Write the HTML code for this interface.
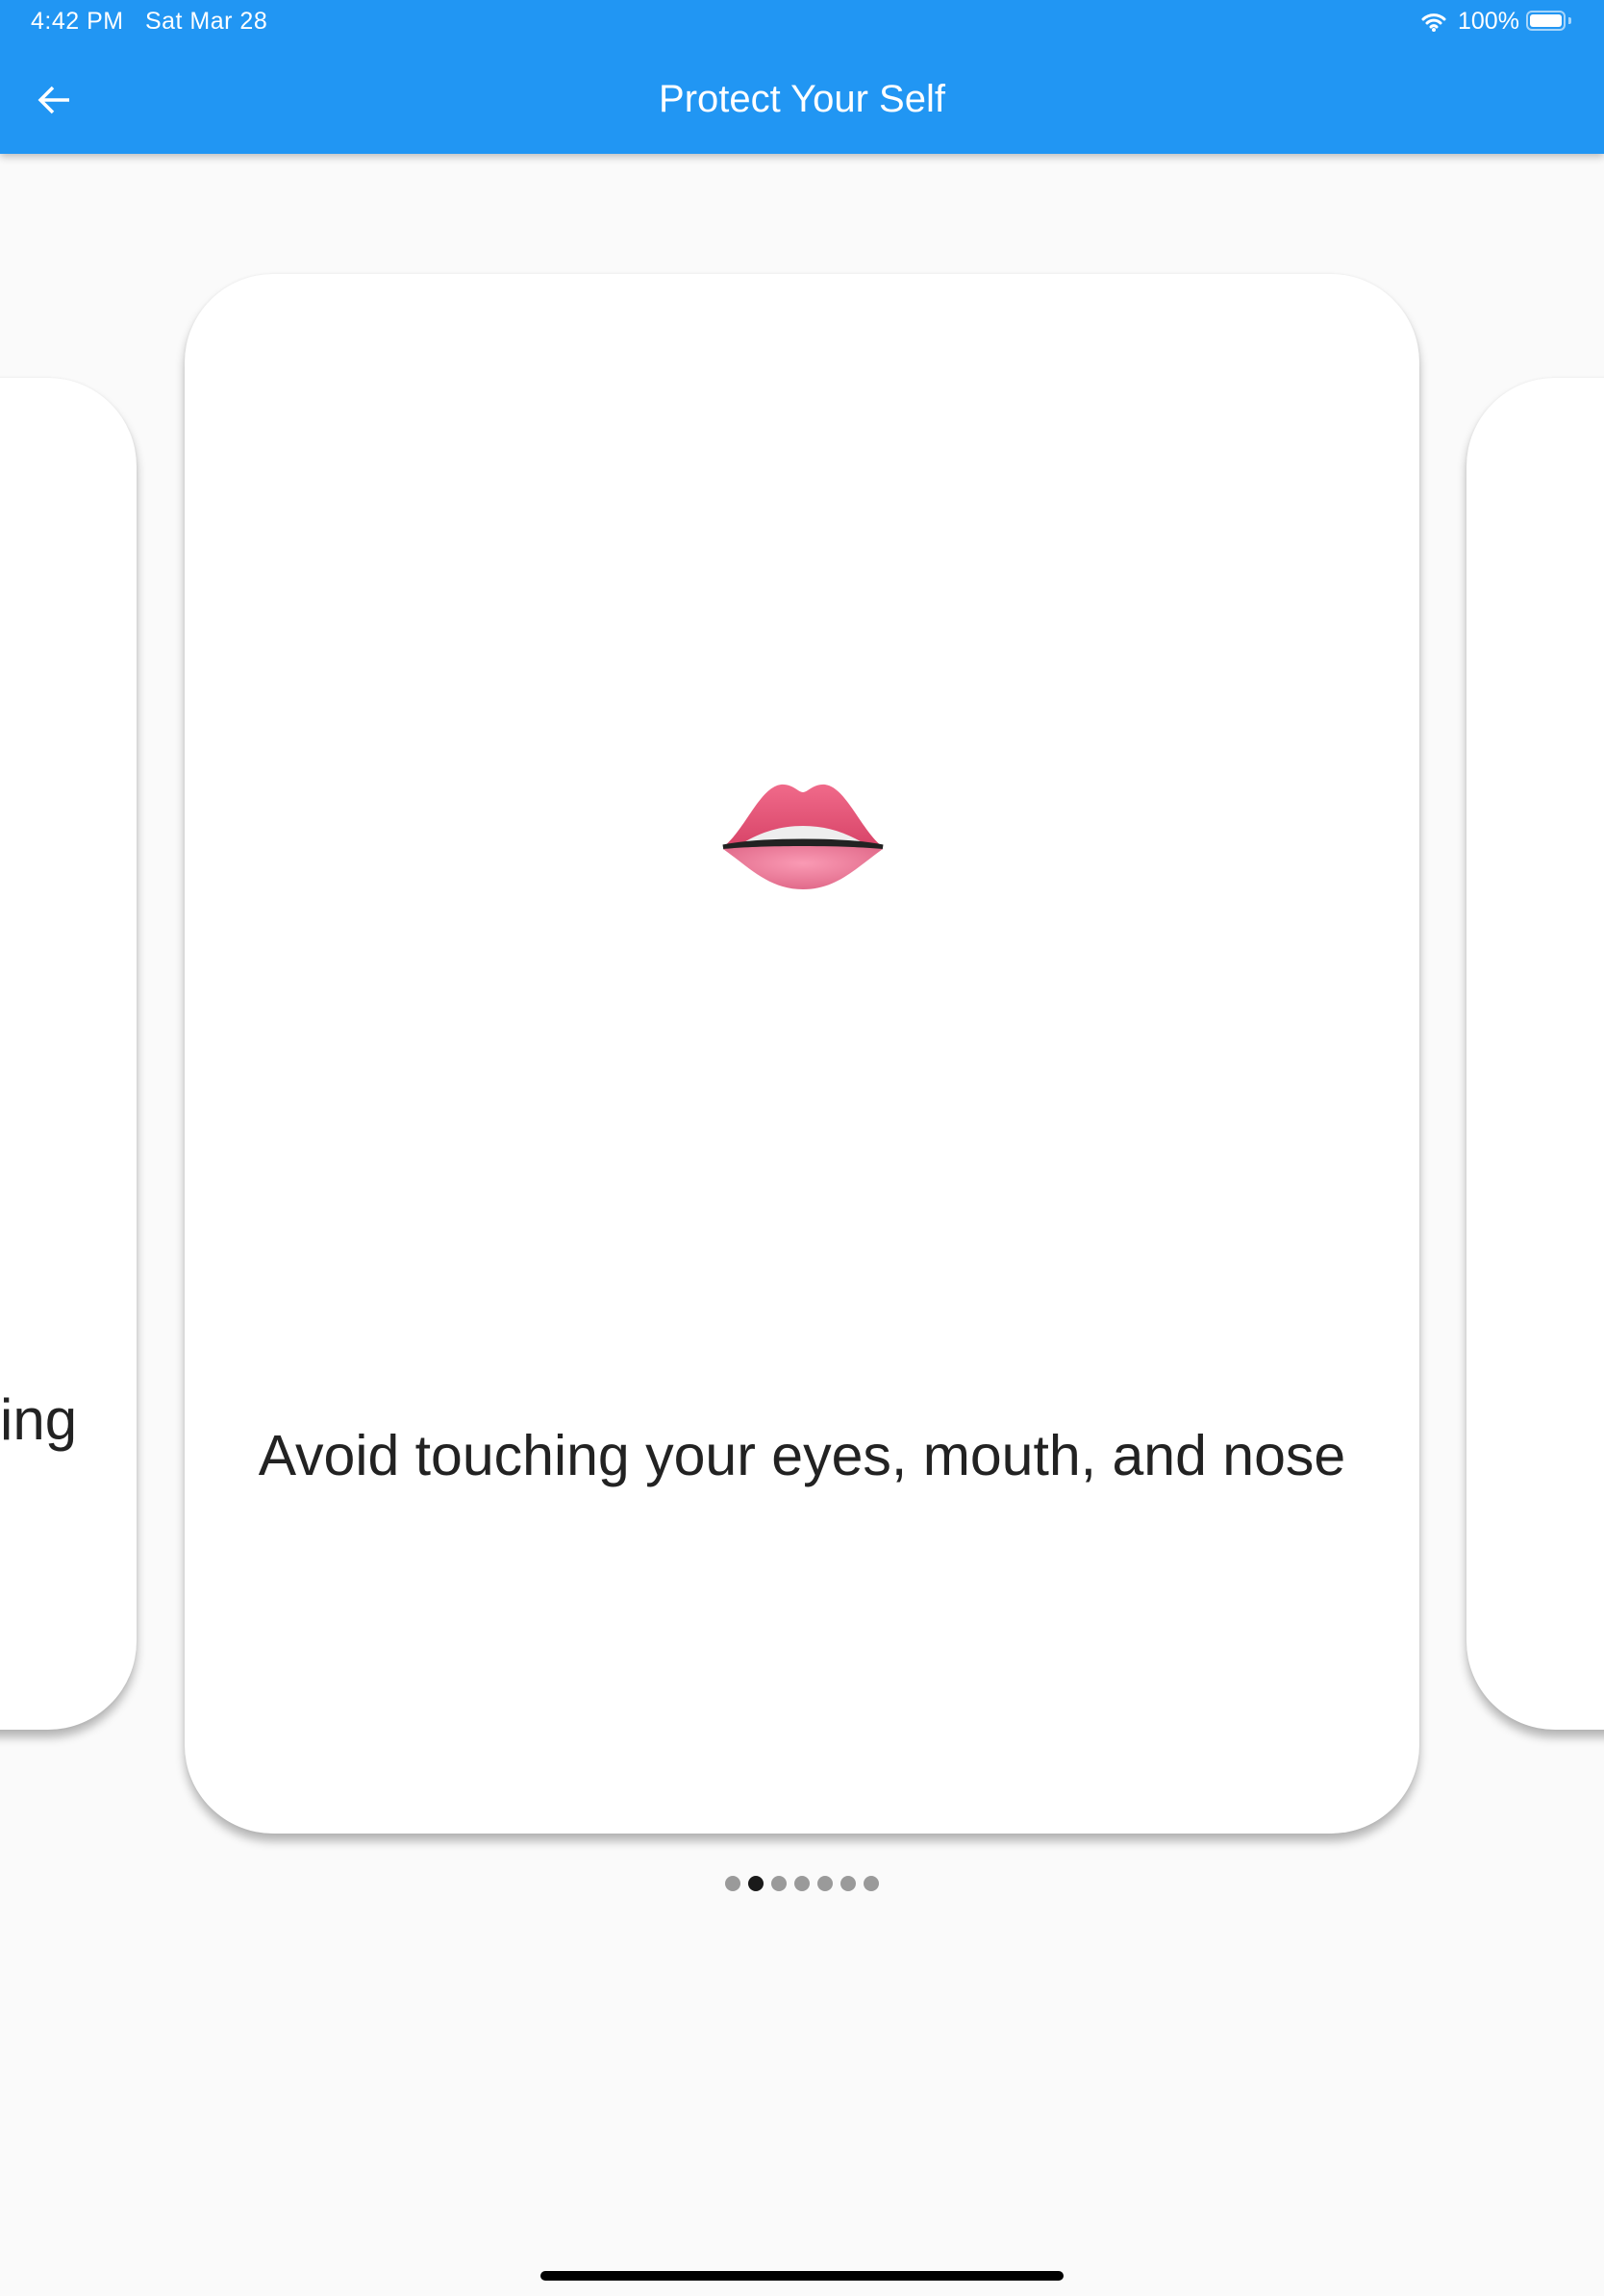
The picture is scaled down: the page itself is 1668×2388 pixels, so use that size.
<!DOCTYPE html>
<html><head><style>
html,body{margin:0;padding:0;}
body{width:1668px;height:2388px;background:#fafafa;position:relative;overflow:hidden;font-family:"Liberation Sans",sans-serif;}
.bar{position:absolute;left:0;top:0;width:1668px;height:160px;background:#2196f3;box-shadow:0 3px 8px rgba(0,0,0,0.25);}
.st{position:absolute;top:8px;color:#fff;font-size:25px;}
.title{position:absolute;top:81px;width:100%;text-align:center;color:#fff;font-size:40px;}
.card{position:absolute;background:#fff;border-radius:92px;box-shadow:0 8px 10px rgba(0,0,0,0.28),0 0 3px rgba(0,0,0,0.06);}
.dot{position:absolute;top:1951px;width:16px;height:16px;border-radius:50%;background:#9a9a9a;}
</style></head><body>
<div class="bar">
 <div class="st" style="left:32px;letter-spacing:0.5px">4:42 PM&nbsp;&nbsp;&nbsp;Sat Mar 28</div>
 <svg style="position:absolute;left:1478px;top:12px" width="26" height="22" viewBox="0 0 26 22"><path d="M2 8a16 16 0 0 1 22 0M6 12a10 10 0 0 1 14 0M10 16a4 4 0 0 1 6 0" stroke="#fff" stroke-width="3" fill="none" stroke-linecap="round"/><circle cx="13" cy="19" r="2" fill="#fff"/></svg>
 <div class="st" style="left:1516px">100%</div>
 <div style="position:absolute;left:1587px;top:11px;width:41px;height:21px;border:2px solid rgba(255,255,255,0.6);border-radius:6px;box-sizing:border-box;padding:2px"><div style="background:#fff;width:100%;height:100%;border-radius:3px"></div></div>
 <div style="position:absolute;left:1631px;top:18px;width:3px;height:7px;background:rgba(255,255,255,0.6);border-radius:0 2px 2px 0"></div>
 <svg style="position:absolute;left:38px;top:88px" width="36" height="32" viewBox="0 0 36 32"><path d="M34 16H4M17 3L4 16l13 13" stroke="#fff" stroke-width="3.5" fill="none"/></svg>
 <div class="title">Protect Your Self</div>
</div>
<div class="card" style="left:-400px;top:393px;width:542px;height:1406px"></div>
<div style="position:absolute;left:0;top:1442px;font-size:60px;color:#222">ing</div>
<div class="card" style="left:1525px;top:393px;width:542px;height:1406px"></div>
<div class="card" style="left:192px;top:285px;width:1284px;height:1622px"></div>
<svg style="position:absolute;left:750px;top:813px" width="170" height="115" viewBox="0 0 170 115">
<defs><linearGradient id="u" x1="0" y1="0" x2="0" y2="1"><stop offset="0" stop-color="#f06a8a"/><stop offset="1" stop-color="#d84468"/></linearGradient>
<radialGradient id="l" cx="0.5" cy="0.4" r="0.6"><stop offset="0" stop-color="#fa9ab4"/><stop offset="1" stop-color="#e16a8a"/></radialGradient></defs>
<path d="M2 68C25 50 40 6 62 3c12-1 18 8 23 8s11-9 23-8c22 3 37 47 60 65z" fill="url(#u)"/>
<path d="M22 64c20-12 40-18 63-18s43 6 63 18z" fill="#eee"/>
<path d="M2 68c40-8 126-8 166 0c-40-4-126-4-166 0z" fill="#222" stroke="#222" stroke-width="5"/>
<path d="M2 70c40-4 126-4 166 0C140 90 120 112 85 112S30 90 2 70z" fill="url(#l)"/>
</svg>
<div style="position:absolute;left:192px;top:1480px;width:1284px;text-align:center;font-size:59px;color:#222">Avoid touching your eyes, mouth, and nose</div>
<div class="dot" style="left:754px"></div>
<div class="dot" style="left:778px;background:#1a1a1a"></div>
<div class="dot" style="left:802px"></div>
<div class="dot" style="left:826px"></div>
<div class="dot" style="left:850px"></div>
<div class="dot" style="left:874px"></div>
<div class="dot" style="left:898px"></div>
<div style="position:absolute;left:562px;top:2362px;width:544px;height:10px;border-radius:5px;background:#000"></div>
</body></html>
